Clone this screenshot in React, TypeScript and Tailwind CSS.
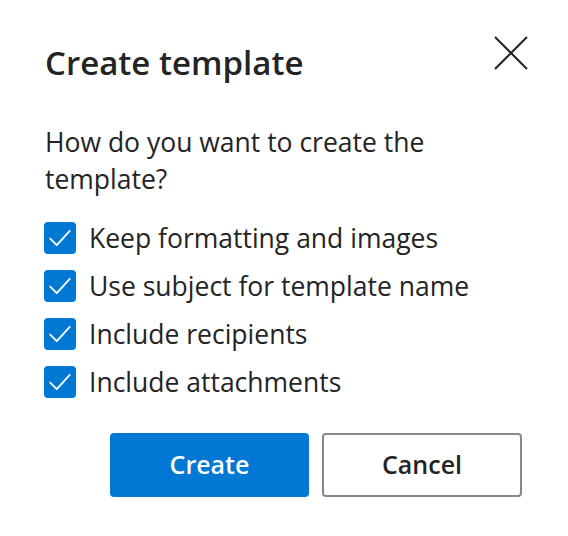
import React from "react";

const options = [
  "Keep formatting and images",
  "Use subject for template name",
  "Include recipients",
  "Include attachments",
];

function CheckBox() {
  return (
    <span className="flex h-[32px] w-[32px] shrink-0 items-center justify-center rounded-[4px] bg-[#0078d4]">
      <svg width="26" height="26" viewBox="0 0 24 24" fill="none">
        <path d="M3 12.5l6 6L21 5.5" stroke="white" strokeWidth="1.7" strokeLinecap="round" strokeLinejoin="round" />
      </svg>
    </span>
  );
}

export default function App() {
  return (
    <div
      className="h-[536px] w-[568px] bg-white text-[#242424]"
      style={{ fontFamily: '"Open Sans", "Noto Sans", sans-serif' }}
    >
      <div className="flex flex-col pl-[44px] pr-[40px] pt-[40px]">
        <div className="flex items-start justify-between">
          <h1 className="pl-[1px] text-[33px] font-semibold leading-[46px] text-[#242424]">Create template</h1>
          <button className="mt-[-3px] flex h-[32px] w-[34px] items-center justify-center">
            <svg width="34" height="34" viewBox="0 0 34 34" fill="none">
              <path d="M1 1L33 33M33 1L1 33" stroke="#242424" strokeWidth="2" />
            </svg>
          </button>
        </div>
        <p className="mt-[38px] pl-[1px] text-[26.5px] leading-[37px] text-[#242424]">
          How do you want to create the
          <br />
          template?
        </p>
        <div className="mt-[24px] flex flex-col gap-[16px]">
          {options.map((o) => (
            <label key={o} className="flex items-center gap-[13px]">
              <CheckBox />
              <span className="text-[26.5px] leading-[32px]">{o}</span>
            </label>
          ))}
        </div>
        <div className="mt-[35px] flex justify-end gap-[13px] pr-[6px]">
          <button className="h-[64px] w-[199px] rounded-[4px] bg-[#0078d4] text-[25px] font-semibold text-white">
            Create
          </button>
          <button className="h-[64px] w-[200px] rounded-[4px] border-2 border-[#8a8886] bg-white text-[25px] font-semibold text-[#242424]">
            Cancel
          </button>
        </div>
      </div>
    </div>
  );
}
